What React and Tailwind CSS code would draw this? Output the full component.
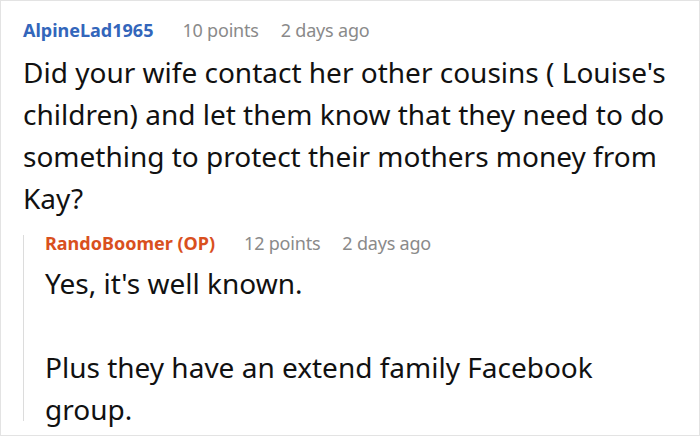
import React from 'react';

const Meta = ({ name, color, points, age }) => (
  <div className="flex items-baseline text-[18px] leading-[16px]">
    <span className={`font-bold ${color}`}>{name}</span>
    <span className="ml-[29px] text-[#8a8a8a] tracking-[-0.2px]">{points}</span>
    <span className="ml-[22px] text-[#8a8a8a] tracking-[-0.2px]">{age}</span>
  </div>
);

const App = () => {
  return (
    <div
      className="w-[700px] h-[436px] bg-white border border-[#e3e3e3] overflow-hidden"
      style={{ fontFamily: '"Noto Sans", "Open Sans", sans-serif' }}
    >
      <div className="pl-[22px] pt-[21px]">
        <Meta name="AlpineLad1965" color="text-[#3366bb]" points="10 points" age="2 days ago" />
        <p className="mt-[13px] text-[28px] leading-[42px] text-[#111] pr-[20px]">
          Did your wife contact her other cousins ( Louise's children) and let them know that they need to do something to protect their mothers money from Kay?
        </p>

        {/* reply */}
        <div className="mt-[16px] h-[186px] border-l border-[#dcdcdc] pl-[21px] pr-[60px]">
          <Meta name="RandoBoomer (OP)" color="text-[#d9501e]" points="12 points" age="2 days ago" />
          <div className="mt-[11px] text-[28px] leading-[42px] text-[#111]">
            <p>Yes, it's well known.</p>
            <p className="mt-[42px]">Plus they have an extend family Facebook group.</p>
          </div>
        </div>
      </div>
    </div>
  );
};

export default App;
